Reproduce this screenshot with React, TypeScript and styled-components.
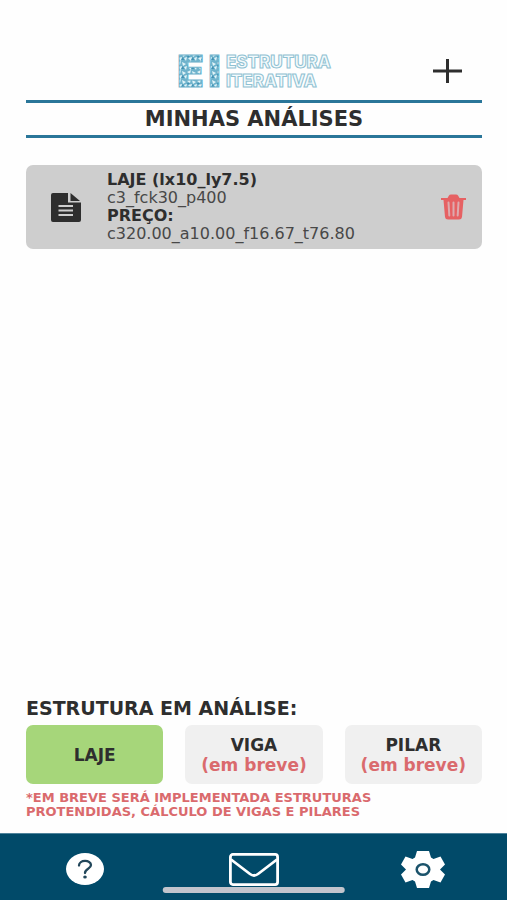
import React, { useState } from "react";
import styled, { createGlobalStyle } from "styled-components";

const GlobalStyle = createGlobalStyle`
  *, *::before, *::after { box-sizing: border-box; }
  body {
    margin: 0;
    background: #fefefe;
    color: #2e2e2e;
    font-family: "DejaVu Sans", Inter, sans-serif;
  }
`;

const Screen = styled.div`
  display: flex;
  flex-direction: column;
  min-height: 100vh;
`;

const Content = styled.main`
  flex: 1;
  display: flex;
  flex-direction: column;
  padding: 42px 25px 14px 26px;
`;

const Header = styled.header`
  display: grid;
  grid-template-columns: 1fr auto 1fr;
  align-items: center;
  height: 58px;
`;

const IconButton = styled.button`
  display: flex;
  padding: 0;
  border: 0;
  background: none;
  color: inherit;
  cursor: pointer;
`;

const AddButton = styled(IconButton)`
  grid-column: 3;
  justify-self: end;
  margin-right: 20px;
`;

const LogoArt = styled.svg`
  grid-column: 2;
  display: block;
  overflow: visible;
  font-family: Inter, "Liberation Sans", sans-serif;
`;

const PageTitle = styled.h1`
  margin: 0;
  border: solid #2a7699;
  border-width: 3px 0;
  font-size: 21px;
  line-height: 32px;
  font-weight: 700;
  text-align: center;
`;

const AnalysisList = styled.ul`
  flex: 1;
  margin: 27px 0 0;
  padding: 0;
  list-style: none;
`;

const AnalysisCard = styled.li`
  display: flex;
  align-items: center;
  min-height: 84px;
  padding: 0 16px 0 25px;
  border-radius: 7px;
  background: #cecece;
`;

const AnalysisText = styled.div`
  flex: 1;
  margin-left: 26px;
  font-size: 16px;
  line-height: 18px;
  color: #484848;
`;

const Line = styled.div<{ $strong?: boolean }>`
  font-weight: ${(p) => (p.$strong ? 700 : 400)};
  color: ${(p) => (p.$strong ? "#2e2e2e" : "inherit")};
`;

const SectionTitle = styled.h2`
  margin: 0 0 5px;
  font-size: 19px;
  line-height: 24px;
  font-weight: 700;
`;

const Options = styled.div`
  display: grid;
  grid-template-columns: repeat(3, 1fr);
  gap: 22px;
`;

const OptionButton = styled.button<{ $active?: boolean }>`
  height: 59px;
  padding: 0;
  border: 0;
  border-radius: 7px;
  background: ${(p) => (p.$active ? "#a6d67a" : "#f0f0f0")};
  color: #2e2e2e;
  font: 700 17px/20px "DejaVu Sans", Inter, sans-serif;
`;

const Soon = styled.span`
  display: block;
  color: #da6a6d;
`;

const Note = styled.p`
  margin: 7px 0 0;
  font-size: 13px;
  line-height: 14px;
  font-weight: 700;
  color: #da6a6d;
`;

const TabBar = styled.nav`
  position: relative;
  display: grid;
  grid-template-columns: repeat(3, 1fr);
  justify-items: center;
  align-items: center;
  height: 67px;
  padding-top: 4px;
  border-top: 1px solid #4f839b;
  background: #014a69;
  color: #fff;
`;

const HomeIndicator = styled.div`
  position: absolute;
  bottom: 7px;
  left: 50%;
  width: 36%;
  height: 6px;
  border-radius: 3px;
  background: #c2c5cd;
  transform: translateX(-50%);
`;

const Logo = () => (
  <LogoArt width="154" height="38" viewBox="0 0 154 38" role="img" aria-label="EI Estrutura Iterativa">
    <defs>
      <pattern id="mesh" width="10" height="9" patternUnits="userSpaceOnUse">
        <rect width="10" height="9" fill="#6fb3cc" />
        <path d="M0 2 4 0 3 4zM5 1 9 3 6 5zM1 6 5 5 4 9zM7 6 10 5 9 9z" fill="#e2f4f8" />
        <path d="M0 4 3 4 1 6zM6 5 7 8 4 8z" fill="#3f8fb2" />
      </pattern>
    </defs>
    <g fill="url(#mesh)" stroke="#6fb3cc" strokeWidth="1" fontSize="44" fontWeight="900">
      <text x="0" y="35">E</text>
      <text x="31" y="35">I</text>
    </g>
    <g fill="#f3fafc" stroke="#8fc1d2" strokeWidth="1" fontSize="17" fontWeight="800">
      <text x="49" y="16">ESTRUTURA</text>
      <text x="49" y="35">ITERATIVA</text>
    </g>
  </LogoArt>
);

const PlusIcon = () => (
  <svg width="29" height="24" viewBox="0 0 29 24" aria-hidden="true">
    <path d="M0 12H29M14.500 0V24" stroke="#2e2e2e" strokeWidth="3" />
  </svg>
);

const DocumentIcon = () => (
  <svg width="30" height="29" viewBox="0 0 30 29" aria-hidden="true">
    <path d="M2 0H17V9.500H30V27Q30 29 28 29H2Q0 29 0 27V2Q0 0 2 0Z" fill="#2e2e2e" />
    <path d="M19.500 0 29 8H19.500Z" fill="#2e2e2e" />
    <path d="M7.500 13H22M7.500 17.500H22M7.500 22H22" stroke="#cecece" strokeWidth="1.800" />
  </svg>
);

const TrashIcon = () => (
  <svg width="25" height="26" viewBox="0 0 25 26" aria-hidden="true">
    <path d="M0 4H6.500L8 1.500Q8.500.5 10 .5H15Q16.500.5 17 1.500L18.500 4H25V6H22.500L21 23Q20.700 25.500 18 25.500H7Q4.300 25.500 4 23L2.500 6H0Z" fill="#e66163" />
    <path d="M7.500 8.500 8.300 21.500M12.500 8.500V21.500M17.500 8.500 16.700 21.500" stroke="#deaaae" strokeWidth="2" strokeLinecap="round" />
  </svg>
);

const HelpIcon = () => (
  <svg width="38" height="32" viewBox="0 0 38 32" aria-hidden="true">
    <ellipse cx="19" cy="16" rx="19" ry="16" fill="#fff" />
    <path d="M13 12.500C13 6.500 25 6.500 25 12C25 16 19 15.500 19 20" fill="none" stroke="#21465a" strokeWidth="2.300" strokeLinecap="round" />
    <ellipse cx="19" cy="24" rx="1.800" ry="1.500" fill="#21465a" />
  </svg>
);

const MailIcon = () => (
  <svg width="50" height="33" viewBox="0 0 50 33" aria-hidden="true">
    <g fill="none" stroke="#fff" strokeWidth="2.800" strokeLinejoin="round">
      <rect x="1.400" y="1.400" width="47.200" height="30.200" rx="2.500" />
      <path d="M2 6.500 21 21Q25 24 29 21L48 6.500" />
    </g>
  </svg>
);

const GearIcon = () => (
  <svg width="44" height="37" viewBox="0 0 44 37" aria-hidden="true">
    <path
      d="M16 0H28L30 6.500L32.500 8L39.500 5.500L44 13.500L39 18.500L44 23.500L39.500 31.500L32.500 29L30 30.500L28 37H16L14 30.500L11.500 29L4.500 31.500L0 23.500L5 18.500L0 13.500L4.500 5.500L11.500 8L14 6.500Z"
      fill="#fff"
    />
    <ellipse cx="22" cy="18.500" rx="6.300" ry="5.300" fill="#fff" stroke="#1b536b" strokeWidth="2.500" />
  </svg>
);

const analyses = [
  { name: "LAJE (lx10_ly7.5)", specs: "c3_fck30_p400", price: "c320.00_a10.00_f16.67_t76.80" },
];

const structures = [
  { name: "LAJE", available: true },
  { name: "VIGA", available: false },
  { name: "PILAR", available: false },
];

export default function App() {
  const [selected, setSelected] = useState("LAJE");
  return (
    <Screen>
      <GlobalStyle />
      <Content>
        <Header>
          <Logo />
          <AddButton aria-label="Nova análise"><PlusIcon /></AddButton>
        </Header>
        <PageTitle>MINHAS ANÁLISES</PageTitle>
        <AnalysisList>
          {analyses.map((a) => (
            <AnalysisCard key={a.name}>
              <DocumentIcon />
              <AnalysisText>
                <Line $strong>{a.name}</Line>
                <Line>{a.specs}</Line>
                <Line $strong>PREÇO:</Line>
                <Line>{a.price}</Line>
              </AnalysisText>
              <IconButton aria-label="Excluir análise"><TrashIcon /></IconButton>
            </AnalysisCard>
          ))}
        </AnalysisList>
        <SectionTitle>ESTRUTURA EM ANÁLISE:</SectionTitle>
        <Options>
          {structures.map((s) => (
            <OptionButton
              key={s.name}
              $active={selected === s.name}
              aria-pressed={selected === s.name}
              disabled={!s.available}
              onClick={() => setSelected(s.name)}
            >
              {s.name}
              {!s.available && <Soon>(em breve)</Soon>}
            </OptionButton>
          ))}
        </Options>
        <Note>
          *EM BREVE SERÁ IMPLEMENTADA ESTRUTURAS
          <br />
          PROTENDIDAS, CÁLCULO DE VIGAS E PILARES
        </Note>
      </Content>
      <TabBar aria-label="Principal">
        <IconButton aria-label="Ajuda"><HelpIcon /></IconButton>
        <IconButton aria-label="Contato"><MailIcon /></IconButton>
        <IconButton aria-label="Configurações"><GearIcon /></IconButton>
        <HomeIndicator />
      </TabBar>
    </Screen>
  );
}
